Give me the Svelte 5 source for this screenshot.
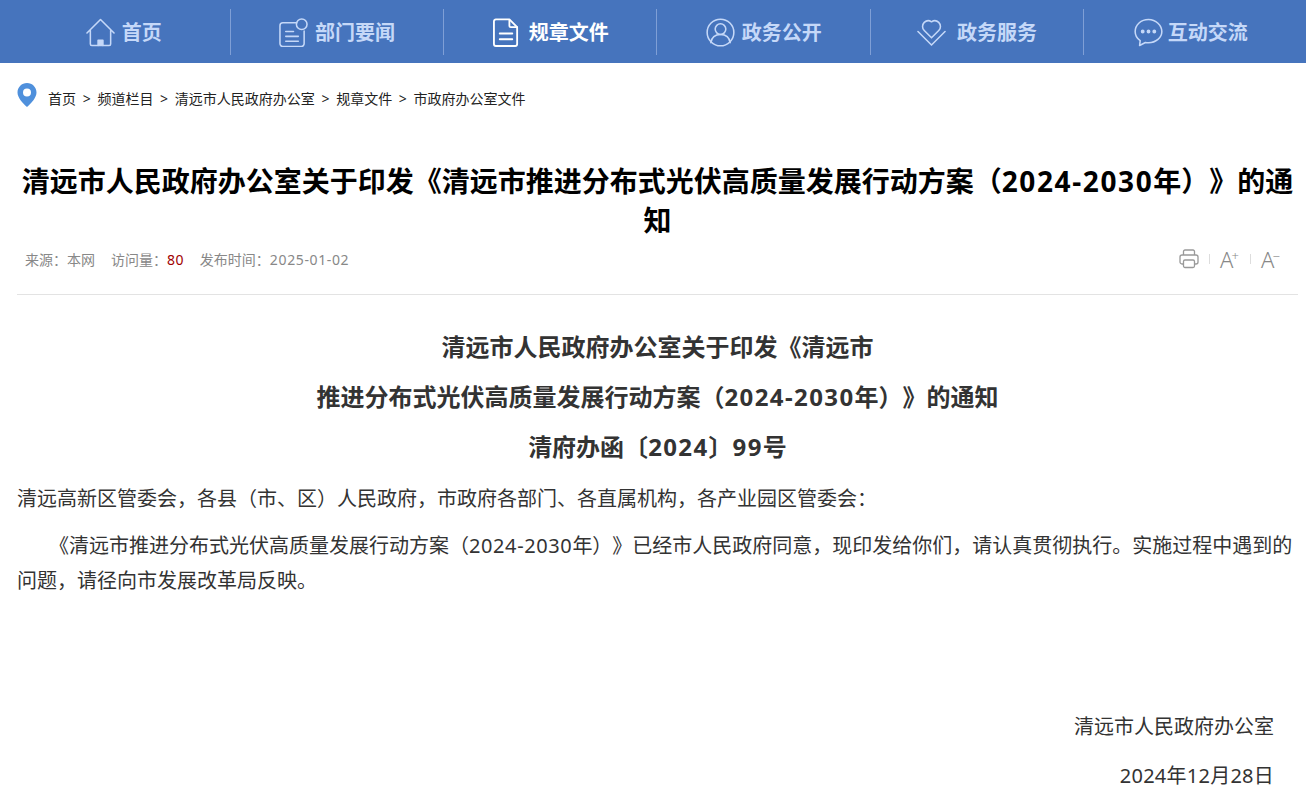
<script>
  const navItems = [
    { label: '首页', icon: 'home' },
    { label: '部门要闻', icon: 'news' },
    { label: '规章文件', icon: 'file', active: true },
    { label: '政务公开', icon: 'user' },
    { label: '政务服务', icon: 'heart' },
    { label: '互动交流', icon: 'chat' }
  ];
  const crumbs = ['首页', '频道栏目', '清远市人民政府办公室', '规章文件', '市政府办公室文件'];
</script>

<header class="nav">
  <ul class="nav-list">
    {#each navItems as item}
      <li class="nav-item {item.icon}" class:active={item.active}>
        <svg class="nav-icon" viewBox="0 0 30 30" fill="none" stroke="currentColor" stroke-width="1.6" stroke-linejoin="round" stroke-linecap="round">
          {#if item.icon === 'home'}
            <path d="M1 15.500 15 1.500 29 15.500M4.500 13v14a1.500 1.500 0 0 0 1.500 1.500h18a1.500 1.500 0 0 0 1.500-1.500V13" />
            <path d="M12.500 28.500v-5.500h5v5.500" fill="currentColor" />
          {:else if item.icon === 'news'}
            <path d="M18.500 5H4a3 3 0 0 0-3 3v18.500a3 3 0 0 0 3 3h19a3 3 0 0 0 3-3V13.500" />
            <circle cx="23.500" cy="6.500" r="5.500" />
            <path d="M7 14h8M7 19h13M7 24h13" />
          {:else if item.icon === 'file'}
            <path d="M18 1.500H4a2 2 0 0 0-2 2V27a2 2 0 0 0 2 2h20a2 2 0 0 0 2-2V9.500z" stroke-width="1.900" />
            <path d="M18 2v6a1.500 1.500 0 0 0 1.500 1.500H26M8 16h13M8 22h13" stroke-width="1.900" />
          {:else if item.icon === 'user'}
            <circle cx="15" cy="15" r="13.800" />
            <circle cx="15" cy="11.500" r="5.500" />
            <path d="M5 25.500c.8-5.500 4.800-8.500 10-8.500s9.200 3 10 8.500" />
          {:else if item.icon === 'heart'}
            <path d="M15 20.500 7.500 13a6 6 0 0 1 0-8.500 6 6 0 0 1 7.500-.6 6 6 0 0 1 7.500.6 6 6 0 0 1 0 8.500z" />
            <path d="M1 14 15 28l14-14" />
          {:else}
            <path d="M15 1.500C7.300 1.500 1.200 7 1.200 14c0 4 2 7.300 5.200 9.500l-.6 5 6-3.200c1 .2 2.100.3 3.200.3 7.700 0 13.800-5.300 13.800-11.600S22.700 1.500 15 1.500z" />
            <circle cx="9" cy="14" r="1.200" fill="currentColor" />
            <circle cx="15" cy="14" r="1.200" fill="currentColor" />
            <circle cx="21" cy="14" r="1.200" fill="currentColor" />
          {/if}
        </svg>
        <span>{item.label}</span>
      </li>
    {/each}
  </ul>
</header>

<main class="page">
  <nav class="crumbs">
    <svg class="pin" viewBox="0 0 20 24">
      <path fill-rule="evenodd" fill="#4f90dc" d="M10 0c5.300 0 9.500 4.200 9.500 9.400 0 5-5 10.600-9.500 14.600C5.500 20 .5 14.400.5 9.400.5 4.200 4.700 0 10 0zm0 5.500a4 4 0 1 0 0 8 4 4 0 0 0 0-8z" />
    </svg>
    {#each crumbs as c, i}
      {#if i > 0}<span class="sep">&gt;</span>{/if}
      <span>{c}</span>
    {/each}
  </nav>

  <h1 class="title">清远市人民政府办公室关于印发《清远市推进分布式光伏高质量发展行动方案（<span class="num">2024-2030</span>年）》的通知</h1>

  <div class="meta">
    <div class="meta-left">
      <span>来源：本网</span>
      <span>访问量：<em>80</em></span>
      <span>发布时间：<span class="num">2025-01-02</span></span>
    </div>
    <div class="tools">
      <svg class="print" viewBox="0 0 20 20" fill="none" stroke="#999" stroke-width="1.300">
        <path d="M4.500 6V2.500a1.500 1.500 0 0 1 1.500-1.500h8a1.500 1.500 0 0 1 1.500 1.500V6" />
        <path d="M4.500 15H3a2 2 0 0 1-2-2V8a2 2 0 0 1 2-2h14a2 2 0 0 1 2 2v5a2 2 0 0 1-2 2h-1.500" />
        <rect x="4.500" y="11" width="11" height="7.500" rx="1.500" />
      </svg>
      <i class="bar"></i>
      <span class="font-btn">A<sup>+</sup></span>
      <i class="bar"></i>
      <span class="font-btn">A<sup>−</sup></span>
    </div>
  </div>

  <article class="body">
    <p class="center">清远市人民政府办公室关于印发《清远市</p>
    <p class="center">推进分布式光伏高质量发展行动方案（<span class="num">2024-2030</span>年）》的通知</p>
    <p class="center">清府办函〔<span class="num">2024</span>〕<span class="num">99</span>号</p>
    <p class="plain">清远高新区管委会，各县（市、区）人民政府，市政府各部门、各直属机构，各产业园区管委会：</p>
    <p class="indent">《清远市推进分布式光伏高质量发展行动方案（<span class="num">2024-2030</span>年）》已经市人民政府同意，现印发给你们，请认真贯彻执行。实施过程中遇到的问题，请径向市发展改革局反映。</p>
    <p class="sign">清远市人民政府办公室</p>
    <p class="date">2024年12月28日</p>
  </article>
</main>

<style>
  :global(body) {
    margin: 0;
    background: #fff;
    font-family: "Noto Sans", "Noto Sans CJK SC", sans-serif;
    text-spacing-trim: space-all;
  }

  .num {
    letter-spacing: 0.03em;
  }

  .title .num,
  .center .num {
    letter-spacing: 0.058em;
  }

  .meta-left .num {
    letter-spacing: 0.045em;
  }

  .nav {
    height: 63px;
    background: #4674bd;
    padding: 9px 8.5px 0 17.5px;
    box-sizing: border-box;
  }

  .nav-list {
    display: grid;
    grid-template-columns: repeat(6, 1fr);
    margin: 0;
    padding: 0;
    list-style: none;
  }

  .nav-item {
    height: 46px;
    display: flex;
    align-items: center;
    justify-content: center;
    gap: 7px;
    color: #c5d8f8;
    font-size: 20px;
    font-weight: 700;
    border-right: 1px solid #7f9fd6;
  }

  .nav-item span {
    margin-bottom: 2px;
  }

  .nav-item:last-child {
    border-right: 0;
  }

  .nav-item.active {
    color: #fff;
  }

  .nav-item.heart {
    gap: 11px;
  }

  .nav-item.file {
    gap: 8px;
  }

  .nav-item.chat {
    gap: 5px;
  }

  .nav-icon {
    width: 29px;
    height: 29px;
    flex: none;
  }

  .page {
    padding: 0 8px 0 17px;
  }

  .crumbs {
    display: flex;
    align-items: flex-end;
    height: 45px;
    font-size: 14px;
    line-height: 18px;
    color: #222;
  }

  .pin {
    width: 20px;
    height: 24px;
    margin-right: 11px;
    align-self: flex-start;
    margin-top: 20px;
  }

  .sep {
    margin: 0 6.700px;
  }

  .title {
    margin: 0;
    padding-top: 54px;
    font-size: 28px;
    line-height: 39px;
    font-weight: 700;
    color: #000;
    text-align: center;
  }

  .meta {
    display: flex;
    justify-content: space-between;
    align-items: center;
    height: 54px;
    padding: 0 17px 0 8px;
    border-bottom: 1px solid #e3e3e3;
    font-size: 14px;
    color: #888;
  }

  .meta-left {
    display: flex;
    gap: 16px;
    margin-bottom: 17px;
  }

  .meta-left em {
    font-style: normal;
    color: #a00000;
    letter-spacing: 0.03em;
  }

  .tools {
    display: flex;
    align-items: center;
    gap: 10px;
    margin-bottom: 16px;
  }

  .print {
    width: 20px;
    height: 20px;
  }

  .bar {
    width: 1px;
    height: 10px;
    background: #ddd;
  }

  .font-btn {
    font-size: 22px;
    line-height: 20px;
    font-weight: 300;
    color: #888;
    width: 20px;
    white-space: nowrap;
  }

  .font-btn sup {
    font-size: 13px;
    line-height: 0;
    vertical-align: 7px;
    margin-left: -2px;
  }

  .body {
    color: #333;
    font-size: 20px;
  }

  .body p {
    margin: 0;
    line-height: 35px;
  }

  .body .center {
    text-align: center;
    font-size: 24px;
    font-weight: 700;
    line-height: 50px;
  }

  .body .center:first-child {
    padding-top: 27px;
  }

  .plain {
    padding-top: 9px;
    padding-bottom: 12px;
  }

  .indent {
    text-indent: 32px;
  }

  .body .sign,
  .body .date {
    text-align: right;
    padding-right: 24px;
  }

  .body .sign {
    padding-top: 111px;
    padding-bottom: 14px;
  }

  .body .date {
    letter-spacing: 0.012em;
  }
</style>
